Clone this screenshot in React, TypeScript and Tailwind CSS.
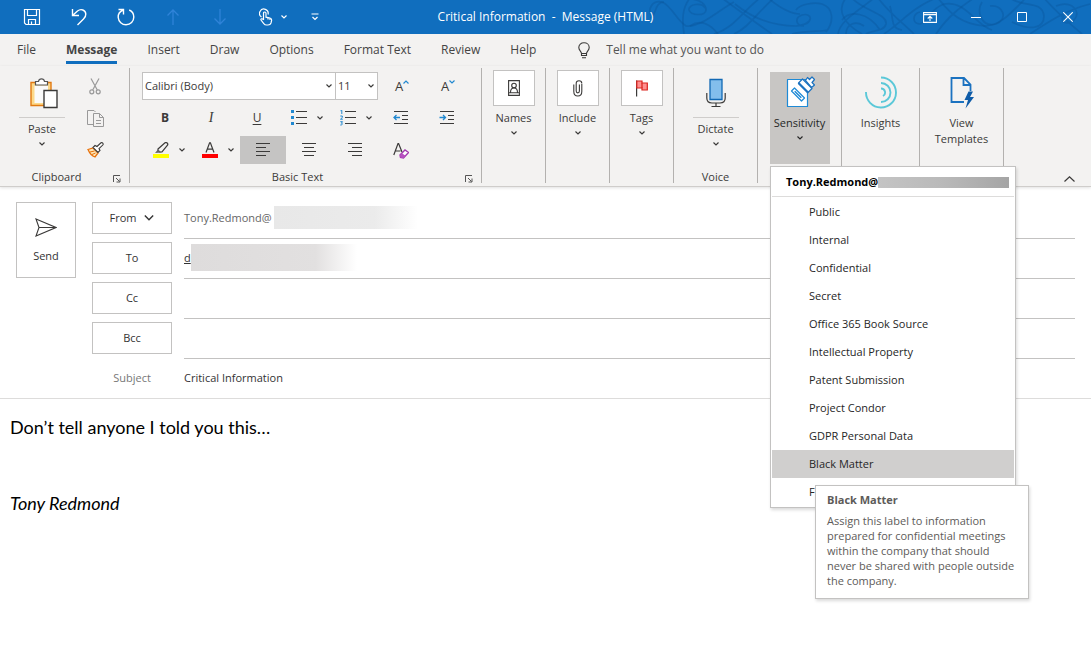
import React from "react";

const ink = "#3b3a39";

function Chevron({ className = "", size = 6 }: { className?: string; size?: number }) {
  return (
    <svg width={size} height={size} viewBox="0 0 6 6" fill="none" stroke="currentColor" strokeWidth={size > 6 ? 0.85 : 1.15} className={`shrink-0 ${className}`} aria-hidden="true">
      <path d="M0.5 1.5L3 4L5.5 1.5" />
    </svg>
  );
}

function SwirlPattern() {
  return (
    <svg className="absolute right-0 top-0 h-[34px] w-[461px]" viewBox="630 0 461 34" fill="none" stroke="#0b559c" strokeOpacity="0.4" strokeWidth="1.7" aria-hidden="true">
      <path d="M653 18C646 10 652 0 662 2C672 6 676 20 686 26C700 28 716 12 734 2" />
      <path d="M690 -2C682 8 682 20 684 34M664 2C654 2 656 18 650 18M690 26C702 18 712 26 718 34" />
      <path d="M705 8C702 2 688 4 689 10C691 16 706 16 706 10C706 4 700 0 692 -1" />
      <path d="M714 34C734 28 742 12 760 -2M734 34C748 28 756 14 774 -2M722 -2C738 10 752 20 772 34" />
      <path d="M735 4C752 18 774 26 796 26C816 24 812 12 802 15C794 18 796 26 804 26" />
      <path d="M768 -2C780 8 790 14 800 14M796 10C800 4 814 2 822 4C834 8 834 22 826 32M792 34C808 30 820 32 828 30" />
      <path d="M846 -2C836 10 844 24 862 34M874 -2C860 10 840 20 838 34M846 34C846 24 856 20 864 26" />
      <path d="M852 -2C862 10 888 14 886 24C884 32 872 30 866 34M842 20C850 10 868 12 880 30" />
      <path d="M878 -2C890 14 902 22 914 34M890 6C894 20 890 28 902 30M884 34C904 20 912 8 936 -2" />
      <path d="M920 12C912 14 912 24 920 24C928 22 928 10 944 4C966 0 976 26 992 30" />
      <path d="M936 34C948 16 962 6 974 -2M938 -2C950 14 962 24 984 26C1000 26 1010 14 1024 0" />
      <path d="M982 2C976 12 982 28 996 24C1008 20 1004 4 990 6M1010 -2C1024 8 1042 0 1044 16C1044 30 1028 30 1012 22" />
      <path d="M1030 34C1048 22 1066 10 1090 4M1044 -2C1058 14 1070 24 1082 34M1056 6C1072 0 1082 12 1074 20C1064 28 1058 18 1066 14" />
    </svg>
  );
}

function QuickButton({ label, dim, children }: { label: string; dim?: boolean; children: React.ReactNode }) {
  return (
    <button aria-label={label} disabled={dim} className={`flex h-[34px] w-[47px] items-center justify-center ${dim ? "text-[#2f83d8]" : "text-white"}`}>
      {children}
    </button>
  );
}

function TitleBar() {
  return (
    <header className="relative grid h-[34px] grid-cols-[1fr_auto_1fr] items-center bg-[#106ebe] text-white">
      <SwirlPattern />
      <div className="flex pl-2">
        <QuickButton label="Save">
          <svg width="18" height="18" viewBox="0 0 18 18" fill="none" stroke="currentColor" strokeWidth="1.2"><path d="M1.5 1.5H16.5V16.5H3L1.5 15ZM4.5 1.5V7.5H13.5V1.5M5.5 16.5V11.5H12.5V16.5M8.5 16.5V13.5" /></svg>
        </QuickButton>
        <QuickButton label="Undo">
          <svg width="18" height="18" viewBox="0 0 18 18" fill="none" stroke="currentColor" strokeWidth="1.4"><path d="M2.5 1V7.5H9M2.8 7.2L7.5 3C11 0.3 15.5 2 15.8 6C16 8.5 14.5 10 13.5 11L7.5 17" /></svg>
        </QuickButton>
        <QuickButton label="Redo">
          <svg width="18" height="18" viewBox="0 0 18 18" fill="none" stroke="currentColor" strokeWidth="1.4"><path d="M1.5 1.5H6.5V6.5M6.2 2C2.5 3.5 1 6.5 1.2 9.5C1.6 13.8 5 16.8 9 16.8C13.5 16.8 16.8 13.5 16.8 9C16.8 6 15 3.2 12.2 2" /></svg>
        </QuickButton>
        <QuickButton label="Previous item" dim>
          <svg width="14" height="18" viewBox="0 0 14 18" fill="none" stroke="currentColor" strokeWidth="1.3"><path d="M7 17V2M1.5 7.5L7 2L12.5 7.5" /></svg>
        </QuickButton>
        <QuickButton label="Next item" dim>
          <svg width="14" height="18" viewBox="0 0 14 18" fill="none" stroke="currentColor" strokeWidth="1.3"><path d="M7 1V16M1.5 10.5L7 16L12.5 10.5" /></svg>
        </QuickButton>
        <button aria-label="Touch or mouse mode" className="flex h-[34px] w-12 items-center justify-end gap-2 pr-1">
          <svg width="14" height="18" viewBox="0 0 14 18" fill="none" stroke="currentColor" strokeWidth="1.2"><path d="M2.5 9A4.3 4.3 0 1 1 9 6.5M4.5 12V5.2C4.5 3.6 7 3.6 7 5.2V9.2L11 10C12.5 10.4 12.8 11 12.6 12.5L12 15C11.5 16.5 10.5 17 9 17H7.5C6 17 5.5 16.5 4.8 15.6L2 12C1.6 11 3 10.3 4 11.2L4.5 12" /><path d="M9 9.5V11.5M11 10V12" /></svg>
          <Chevron />
        </button>
        <button aria-label="Customize toolbar" className="ml-3 flex h-[34px] w-6 items-center justify-center">
          <svg width="8" height="8" viewBox="0 0 8 8" fill="none" stroke="currentColor" strokeWidth="1.2"><path d="M0.5 1H7.5M1.5 4L4 6.5L6.5 4" /></svg>
        </button>
      </div>
      <h1 className="relative whitespace-pre text-[12px] leading-4">Critical Information  -  Message (HTML)</h1>
      <div className="relative flex justify-end">
        <button aria-label="Ribbon display options" className="flex h-8 w-[46px] items-center justify-center">
          <svg width="14" height="11" viewBox="0 0 14 11" fill="none" stroke="currentColor" strokeWidth="1.1"><path d="M0.6 0.6H13.4V10.4H0.6ZM0.6 2.6H13.4M7 9V4.5M4.7 6.5L7 4.3L9.3 6.5" /></svg>
        </button>
        <button aria-label="Minimize" className="flex h-8 w-[46px] items-center justify-center">
          <svg width="10" height="10" viewBox="0 0 10 10" stroke="currentColor"><path d="M0 5.5H10" /></svg>
        </button>
        <button aria-label="Maximize" className="flex h-8 w-[46px] items-center justify-center">
          <svg width="10" height="10" viewBox="0 0 10 10" fill="none" stroke="currentColor"><path d="M0.5 0.5H9.5V9.5H0.5Z" /></svg>
        </button>
        <button aria-label="Close" className="flex h-8 w-[46px] items-center justify-center">
          <svg width="10" height="10" viewBox="0 0 10 10" fill="none" stroke="currentColor" strokeWidth="1.1"><path d="M0.3 0.3L9.7 9.7M9.7 0.3L0.3 9.7" /></svg>
        </button>
      </div>
    </header>
  );
}

const tabs = ["File", "Message", "Insert", "Draw", "Options", "Format Text", "Review", "Help"];

function TabRow() {
  return (
    <nav className="flex h-8 items-center gap-[30px] pl-[17px] text-[12px] leading-4 text-[#444]">
      {tabs.map((tab) =>
        tab === "Message" ? (
          <button key={tab} aria-current="page" className="h-7 border-b-[3px] border-[#106ebe] pt-[3px] font-bold">{tab}</button>
        ) : (
          <button key={tab} className="h-7 border-b-[3px] border-transparent pt-[3px]">{tab}</button>
        ),
      )}
      <button className="flex items-center gap-4 pl-3 text-[#555]">
        <svg width="12" height="17" viewBox="0 0 12 17" fill="none" stroke={ink} strokeWidth="1.1"><path d="M3.5 11.5C3.5 9.5 0.8 8.5 0.8 5.5C0.8 2.8 3 0.8 6 0.8C9 0.8 11.2 2.8 11.2 5.5C11.2 8.5 8.5 9.5 8.5 11.5V13.5H3.5ZM3.5 11.5H8.5M4 15.8H8" /></svg>
        Tell me what you want to do
      </button>
    </nav>
  );
}

function Launcher({ label }: { label: string }) {
  return (
    <button aria-label={label} className="absolute -bottom-1 right-1 flex h-4 w-4 items-center justify-center text-[#555]">
      <svg width="8" height="8" viewBox="0 0 8 8" fill="none" stroke="currentColor"><path d="M0.5 7V0.5H7M3 3L6.5 6.5M7 3.5V7H3.5" /></svg>
    </button>
  );
}

function Group({ width, label, launcher, children }: { width: string; label?: string; launcher?: boolean; children: React.ReactNode }) {
  return (
    <section className={`relative flex h-[115px] shrink-0 flex-col border-r border-[#b3b1af] ${width}`}>
      {children}
      {label && <div className={`-mb-1 mt-auto pb-[2px] text-center ${launcher ? "pr-4" : ""}`}>{label}</div>}
      {launcher && <Launcher label={`${label} settings`} />}
    </section>
  );
}

function ClipboardGroup() {
  return (
    <Group width="w-[130px]" label="Clipboard" launcher>
      <div className="flex pl-[19px]">
        <button className="flex w-[46px] flex-col items-center pt-[10px]">
          <svg width="28" height="31" viewBox="0 0 28 31" className="translate-x-[2px]" fill="none"><path d="M1 4.500H21V27.500H1Z" fill="#fcd98a" stroke="#e17a12" strokeWidth="1.400" /><path d="M4.500 7.500H18V25H4.500Z" fill="#fafafa" /><path d="M5.500 7V3.500H8.500C9 0 14 0 14.500 3.500H17.500V7Z" fill="#fff" stroke="#555" strokeWidth="1.200" /><path d="M14 12.500H27V29.500H14Z" fill="#fff" stroke={ink} strokeWidth="1.400" /></svg>
          <span className="mt-2 w-full border-t border-[#cfcdcb] pt-[3px]">Paste</span>
          <Chevron className="mt-1" />
        </button>
        <div className="ml-[14px] flex flex-col pt-[2px]">
          <button aria-label="Cut" className="flex h-8 w-8 items-center justify-center">
            <svg width="12" height="17" viewBox="0 0 12 17" fill="none" stroke="#999" strokeWidth="1.200"><path d="M2 0.500L8.300 12M10 0.500L3.700 12" /><circle cx="2.800" cy="13.800" r="2" /><circle cx="9.200" cy="13.800" r="2" /></svg>
          </button>
          <button aria-label="Copy" className="flex h-8 w-8 items-center justify-center">
            <svg width="17" height="17" viewBox="0 0 17 17" fill="none" stroke="#999"><path d="M6 14.500H0.500V0.500H7L8.500 2M6.500 3.500H12.500L16.500 7.500V16.500H6.500ZM12.500 3.500V7.500H16.500M9 10.500H14M9 13.500H14" /></svg>
          </button>
          <button aria-label="Format painter" className="flex h-8 w-8 items-center justify-center">
            <svg width="17" height="16" viewBox="0 0 17 16" fill="none"><path d="M1 7.500L6 6L11 11L8 15C5 14 2.500 11 1 7.500Z" fill="#fde7b8" stroke="#e8700a" strokeWidth="1.300" /><path d="M3 10L7.500 9M5 12.500L8.500 11" stroke="#e8700a" /><path d="M6 5.500L8 3.500L10 4.500L14 0.800C15.500 0.300 16.500 1.500 16 2.800L12 6.500L13 8.500L11 10.500Z" fill="#fff" stroke={ink} strokeWidth="1.100" /></svg>
          </button>
        </div>
      </div>
    </Group>
  );
}

function Cell({ label, active, children }: { label: string; active?: boolean; children: React.ReactNode }) {
  return (
    <button aria-label={label} aria-pressed={active} className={`flex h-7 w-[46px] items-center justify-center ${active ? "bg-[#c5c4c3]" : ""}`}>
      {children}
    </button>
  );
}

function SplitCell({ label, children }: { label: string; children: React.ReactNode }) {
  return (
    <button aria-label={label} className="flex h-7 w-[49px] items-center justify-center gap-[10px] pl-1">
      {children}
      <Chevron />
    </button>
  );
}

function Lines({ d }: { d: string }) {
  return <svg width="16" height="14" viewBox="0 0 16 14" stroke={ink} fill="none"><path d={d} /></svg>;
}

function BasicTextGroup() {
  return (
    <Group width="w-[352px]" label="Basic Text" launcher>
      <div className="flex flex-col pl-3 pt-1">
        <div className="flex h-7 items-center">
          <div className="relative">
            <select aria-label="Font" className="h-7 w-[194px] appearance-none border border-[#c3c2c1] bg-white pl-[2px]">
              <option>Calibri (Body)</option>
            </select>
            <Chevron className="pointer-events-none absolute right-1 top-[11px]" />
          </div>
          <div className="relative">
            <select aria-label="Font size" className="h-7 w-[42px] appearance-none border border-l-0 border-[#c3c2c1] bg-white pl-[2px]">
              <option>11</option>
            </select>
            <Chevron className="pointer-events-none absolute right-1 top-[11px]" />
          </div>
          <Cell label="Grow font"><span className="pl-[2px] text-[13px]">A</span><Chevron className="mb-2 rotate-180 text-[#2088d0]" /></Cell>
          <Cell label="Shrink font"><span className="pl-[2px] text-[13px]">A</span><Chevron className="mb-2 text-[#2088d0]" /></Cell>
        </div>
        <div className="mt-1 flex h-7">
          <Cell label="Bold"><span className="text-[12px] font-bold">B</span></Cell>
          <Cell label="Italic"><span className="font-['Liberation_Serif',serif] text-[14px] italic">I</span></Cell>
          <Cell label="Underline"><span className="text-[12px] underline underline-offset-2">U</span></Cell>
          <SplitCell label="Bullets">
            <svg width="16" height="16" viewBox="0 0 16 16" fill="none"><path d="M0 0H3V3H0ZM0 6H3V9H0ZM0 12H3V15H0Z" fill="#2088d0" /><path d="M5 1.500H16M5 7.500H16M5 13.500H16" stroke={ink} /></svg>
          </SplitCell>
          <SplitCell label="Numbering">
            <svg width="16" height="16" viewBox="0 0 16 16" fill="none"><path d="M0.500 0.700L1.800 0.200V4M0.300 6H2.300V7.500L0.500 9.200H2.800M0.300 11.700H2.500L1.400 13.200C3 13.200 2.800 15.200 0.300 15" stroke="#2088d0" /><path d="M5 1.500H16M5 7.500H16M5 13.500H16" stroke={ink} /></svg>
          </SplitCell>
          <Cell label="Decrease indent">
            <svg width="16" height="14" viewBox="0 0 16 14" fill="none" stroke={ink}><path d="M1 0.500H15M9 4.500H15M9 8.500H15M1 12.500H15" /><path d="M7 6.500H1M3.500 4L1 6.500L3.500 9" stroke="#2088d0" strokeWidth="1.300" /></svg>
          </Cell>
          <Cell label="Increase indent">
            <svg width="16" height="14" viewBox="0 0 16 14" fill="none" stroke={ink}><path d="M1 0.500H15M9 4.500H15M9 8.500H15M1 12.500H15" /><path d="M0.500 6.500H6.500M4 4L6.500 6.500L4 9" stroke="#2088d0" strokeWidth="1.300" /></svg>
          </Cell>
        </div>
        <div className="mt-1 flex h-7">
          <SplitCell label="Highlight color">
            <svg width="16" height="16" viewBox="0 0 16 16" fill="none"><path d="M0 12H16V16H0Z" fill="#ff0" /><path d="M5 7L12 0.800C13.500 0 15.500 1.500 14.500 3.200L9 10H6.500L5 8.500Z" stroke={ink} strokeWidth="1.200" /><path d="M5 7.500L8.500 10.500L2 11Z" fill="#666" /></svg>
          </SplitCell>
          <SplitCell label="Font color">
            <svg width="16" height="16" viewBox="0 0 16 16" fill="none"><path d="M0 12H16V16H0Z" fill="#f00" /><path d="M4 10.500L7.600 0.800H8.400L12 10.500M5.200 7.200H10.800" stroke={ink} strokeWidth="1.200" /></svg>
          </SplitCell>
          <Cell label="Align left" active><Lines d="M1 0.500H15M1 4.500H11M1 8.500H15M1 12.500H11" /></Cell>
          <Cell label="Align center"><Lines d="M1 0.500H15M3 4.500H13M1 8.500H15M3 12.500H13" /></Cell>
          <Cell label="Align right"><Lines d="M1 0.500H15M5 4.500H15M1 8.500H15M5 12.500H15" /></Cell>
          <Cell label="Clear formatting">
            <svg width="16" height="17" viewBox="0 0 16 17" fill="none"><path d="M0.800 13L5 1.500H5.600L9 10M2.200 9H7.500" stroke={ink} strokeWidth="1.200" /><path d="M7 13L12 8L15.500 10.500L10.500 16L7.500 15.500Z" fill="#fff" stroke="#a438b0" strokeWidth="1.400" /><path d="M7 13L9 11.200L12.500 13.800L10.500 16L7.500 15.500Z" fill="#b650c0" /></svg>
          </Cell>
        </div>
      </div>
    </Group>
  );
}

function BoxGroup({ label, children }: { label: string; children: React.ReactNode }) {
  return (
    <Group width="w-16">
      <button className="flex flex-col items-center pt-[2px]">
        <span className="flex h-9 w-[42px] items-center justify-center border border-[#c3c2c1] bg-white">{children}</span>
        <span className="mt-1">{label}</span>
        <Chevron className="mt-1" />
      </button>
    </Group>
  );
}

const labels = ["Public", "Internal", "Confidential", "Secret", "Office 365 Book Source", "Intellectual Property", "Patent Submission", "Project Condor", "GDPR Personal Data", "Black Matter", "F"];

function SensitivityMenu() {
  return (
    <div className="absolute left-3 top-[98px] z-10 w-[246px] border border-[#c3c2c1] bg-white pb-px text-[#262626] shadow-[1px_2px_3px_rgba(0,0,0,0.15)]">
      <div className="mx-px flex h-[30px] items-center border-b border-[#dddcdb] pl-[14px] text-black">
        <span className="font-bold">Tony.Redmond@</span>
        <span className="mr-[5px] mt-[2px] h-[11px] flex-1 bg-linear-to-r from-[#c4c4c4] via-[#b9b9b9] to-[#a5a5a5]" />
      </div>
      <ul role="menu" className="px-px pt-px">
        {labels.map((label) => (
          <li key={label} role="none" className="relative">
            <button role="menuitem" className={`block h-7 w-full pl-[37px] text-left ${label === "Black Matter" ? "bg-[#d0cfce]" : ""}`}>{label}</button>
            {label === "Black Matter" && (
              <div role="tooltip" className="absolute left-[43px] top-[35px] z-20 w-[214px] border border-[#c3c2c1] bg-white px-[11px] pb-[10px] pt-[6px] text-[#5d5b59] shadow-[1px_2px_3px_rgba(0,0,0,0.15)]">
                <p className="font-bold">Black Matter</p>
                <p className="-mr-2 mt-[5px] leading-[15px]">
                  Assign this label to information<br />prepared for confidential meetings<br />within the company that should<br />never be shared with people outside<br />the company.
                </p>
              </div>
            )}
          </li>
        ))}
      </ul>
    </div>
  );
}

function Ribbon() {
  return (
    <div className="relative flex h-[121px] border-b border-[#cfcdcb] pt-[2px] text-[11px] leading-4 text-[#3b3a39] shadow-[0_1px_3px_rgba(0,0,0,0.12)]">
      <ClipboardGroup />
      <BasicTextGroup />
      <BoxGroup label="Names">
        <svg width="12" height="16" viewBox="0 0 12 16" fill="none" stroke={ink} strokeWidth="1.100"><path d="M0.600 0.600H11.400V15.400H0.600ZM0.600 12.800H11.400M2.500 12.500C2.500 6.500 9.500 6.500 9.500 12.500" /><circle cx="6" cy="5.500" r="2.300" /></svg>
      </BoxGroup>
      <BoxGroup label="Include">
        <svg width="10" height="17" viewBox="0 0 10 17" fill="none" stroke={ink} strokeWidth="1.100"><path d="M0.800 4.500V11.500C0.800 17.500 8.800 17.500 8.800 11.500V4M3.200 11V3.500C3.200 -0.200 8.800 -0.200 8.800 3.500M3.200 4V11C3.200 13.500 6.400 13.500 6.400 11V4.500" /></svg>
      </BoxGroup>
      <BoxGroup label="Tags">
        <svg width="12" height="17" viewBox="0 0 12 17" fill="none"><path d="M0.600 0.500V16.500" stroke={ink} strokeWidth="1.200" /><path d="M0.800 1H6V3H11.300V10H6V8H0.800Z" fill="#ff8f8f" stroke="#d9221c" strokeWidth="1.200" /><path d="M6 3V8" stroke="#d9221c" strokeWidth="1.200" /></svg>
      </BoxGroup>
      <Group width="w-[84px]" label="Voice">
        <button className="mx-auto flex w-[46px] flex-col items-center pt-[10px]">
          <svg width="20" height="30" viewBox="0 0 20 30" fill="none"><path d="M4 1.500H16V21.500H4Z" fill="#83beec" stroke="#1269b4" strokeWidth="1.300" /><path d="M0.800 15V20C0.800 23.500 2.500 25 6 25H14C17.500 25 19.200 23.500 19.200 20V15M10 25V28.500M5.500 28.500H14.500" stroke={ink} strokeWidth="1.200" /></svg>
          <span className="mt-[9px] w-full border-t border-[#cfcdcb] pt-[3px]">Dictate</span>
          <Chevron className="mt-1" />
        </button>
      </Group>
      <Group width="w-[84px]">
        <button aria-expanded="true" className="mx-auto mt-1 flex h-[92px] w-[60px] flex-col items-center bg-[#c8c6c4] pt-1 text-[#262626]">
          <svg width="30" height="32" viewBox="0 0 30 32" fill="none" stroke="#1e8ad6" strokeWidth="1.200" strokeLinejoin="round">
            <path d="M2.500 3.500H22.500V30.500H2.500Z" fill="#fff" />
            <path d="M6.500 15L9.500 12L19.500 22L16.500 25Z" fill="#fff" />
            <path d="M9.700 15.200L16.300 21.800" strokeWidth="1.500" />
            <path d="M20.500 4.500L22.500 1.500L24.500 3.500L27 1L29.500 3.500L27 6.500L29.500 9L26.500 11.500Z" fill="#fff" stroke="#1b72c0" />
            <path d="M13.500 7L17.500 3L27 12.500L23 16.500Z" fill="#fff" stroke="#1b72c0" />
            <path d="M13.500 7L23 16.500" stroke="#1b72c0" strokeWidth="2.200" />
          </svg>
          <span className="mt-[7px]">Sensitivity</span>
          <Chevron className="mt-1" />
        </button>
        <SensitivityMenu />
      </Group>
      <Group width="w-[78px]">
        <button className="flex flex-col items-center pt-2">
          <svg width="32" height="33" viewBox="0 0 32 33" fill="none" stroke="#5bc8d8" strokeWidth="1.900"><path d="M1 16A15 15 0 1 0 16 1.500M16 7A9.500 9.500 0 1 1 16 26M16 12.500A4 4 0 0 1 18 20" /></svg>
          <span className="mt-[6px]">Insights</span>
        </button>
      </Group>
      <Group width="w-[84px]">
        <button className="flex flex-col items-center pt-2">
          <svg width="24" height="33" viewBox="0 0 24 33" fill="none"><path d="M14 26H1.500V2H14L20.500 8.500V15M13.500 2V9H20.500" stroke="#1b72c0" strokeWidth="1.800" /><path d="M18.500 15.500L14.500 24H18L15.500 32.500L24 21H20L23 15.500Z" fill="#0f5ca8" /></svg>
          <span className="mt-[6px]">View<br />Templates</span>
        </button>
      </Group>
      <button aria-label="Collapse ribbon" className="ml-auto mr-4 self-end pb-1">
        <svg width="11" height="6" viewBox="0 0 11 6" fill="none" stroke={ink} strokeWidth="1.200"><path d="M0.500 5.500L5.500 0.800L10.500 5.500" /></svg>
      </button>
    </div>
  );
}

const lineField = "h-10 border-b border-[#c3c2c1] flex items-center pb-[2px]";
const boxButton = "mt-[3px] flex h-8 w-20 items-center justify-center gap-2 border border-[#c3c2c1] bg-white";

function MailHeader() {
  return (
    <div className="flex border-b border-[#dddcdb] pl-4 pr-4 pt-3 text-[11px] leading-4 text-[#333]">
      <button className="mt-[3px] flex h-[76px] w-[60px] flex-col items-center justify-center gap-[11px] border border-[#c3c2c1] pt-[2px]">
        <svg width="22" height="19" viewBox="0 0 22 19" fill="none" stroke={ink} strokeWidth="1.100"><path d="M1 1L21 9.500L1 18L4 9.500ZM4 9.500H21" /></svg>
        Send
      </button>
      <div className="ml-4 grid flex-1 grid-cols-[80px_1fr] gap-x-3">
        <button className={boxButton}>From <Chevron size={10} /></button>
        <div className={`${lineField} text-[#666]`}>
          Tony.Redmond@
          <span className="ml-[2px] h-[23px] w-36 bg-linear-to-r from-[#e8e8e8] via-[#ebebeb] via-70% to-white" />
        </div>
        <button className={boxButton}>To</button>
        <div className={lineField}>
          <span className="underline">d</span>
          <span className="h-[27px] w-[166px] bg-linear-to-r from-[#dedcdc] via-[#e2e0e0] via-75% to-white" />
        </div>
        <button className={boxButton}>Cc</button>
        <input aria-label="Cc" className={lineField} />
        <button className={boxButton}>Bcc</button>
        <input aria-label="Bcc" className={lineField} />
        <label htmlFor="subject" className="flex h-[39px] items-center justify-center pb-[2px] text-[#777]">Subject</label>
        <input id="subject" defaultValue="Critical Information" className="h-[39px] pb-[2px]" />
      </div>
    </div>
  );
}

export default function App() {
  return (
    <div className="flex min-h-screen flex-col bg-white font-['Open_Sans','Noto_Sans',sans-serif]">
      <TitleBar />
      <div className="relative z-10 bg-[#f3f2f1]">
        <TabRow />
        <Ribbon />
      </div>
      <MailHeader />
      <main role="textbox" aria-label="Message body" contentEditable suppressContentEditableWarning className="flex-1 px-[10px] pt-4 font-['Lato',sans-serif] text-[18px] leading-6 text-black outline-none">
        <p>Don’t tell anyone I told you this…</p>
        <p className="mt-[52px] italic">Tony Redmond</p>
      </main>
    </div>
  );
}
